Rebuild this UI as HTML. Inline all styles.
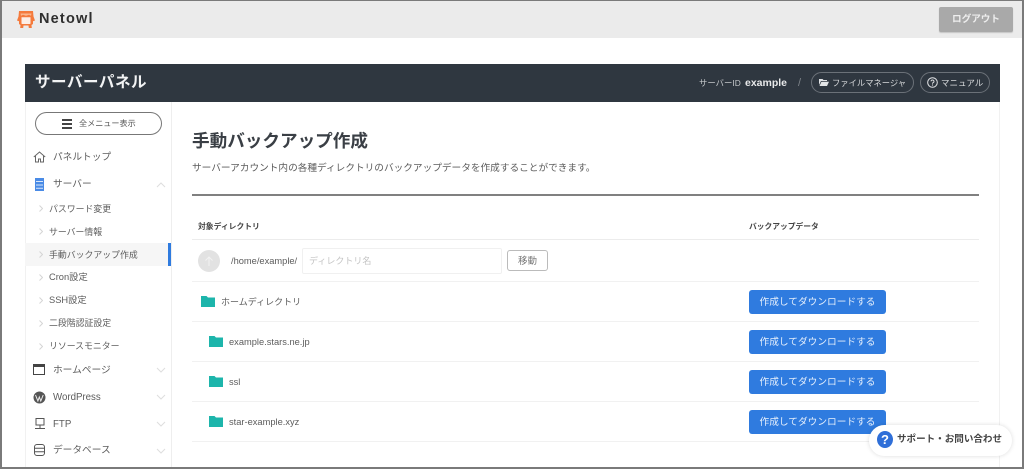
<!DOCTYPE html>
<html lang="ja"><head><meta charset="utf-8"><title>手動バックアップ作成</title>
<style>
*{box-sizing:border-box}
html,body{margin:0;padding:0;width:1024px;height:469px;overflow:hidden;background:#fff;font-family:"Liberation Sans","Noto Sans CJK JP",sans-serif;color:#555}
.a{position:absolute;white-space:nowrap}
svg{position:absolute;display:block}
.t{line-height:16px}
.sub{font-size:8.9px;color:#5c5c5c;left:49px}
.chev{left:39px;width:4px;height:7px}
.main{font-size:9.7px;color:#5c5c5c;left:53px}
.line{left:192px;width:787px;height:1px;background:#f1f1f1}
.btn{left:749px;width:137px;height:24px;background:#2f7bdf;border-radius:3px;color:#e6effb;font-size:9.7px;line-height:25px;text-align:center}
.fold{width:14px;height:11px}
.row{font-size:9px;color:#5c5c5c}
.lat{font-size:9.3px}
.pill{top:72px;height:21px;border:1px solid #6b7178;border-radius:11px;color:#d8dadc;line-height:21px}
</style></head><body>

<div class="a" style="left:0;top:0;width:1024px;height:38px;background:#ebebeb"></div>
<svg style="left:17px;top:11px" width="18" height="17" viewBox="0 0 18 17"><path d="M2 0h14l.5 5.500L18 9.500l-2 .8V13l-1.500 1 .3 3h-3l-.3-2.500h-5l-.3 2.500h-3l.3-3L2 13v-2.700l-2-.8 1.500-4z" fill="#f47a3c"/><path d="M4.500 6.200h9v6a.8.8 0 0 1-.8.8H5.300a.8.8 0 0 1-.8-.8z" fill="#fdeee6"/><path d="M3.500 2.500h11l-.5 2.300-2-1-3 1-3-1-2 1z" fill="#fbb78f"/></svg>
<div class="a" style="left:39px;top:10px;font-size:14.5px;line-height:18px;font-weight:bold;color:#2f2f2f;letter-spacing:1.2px">Netowl</div>
<div class="a" style="left:939px;top:7px;width:74px;height:25px;background:#a9a9a9;border-radius:2px;box-shadow:0 1px 1px #c4c4c4;color:#eee;font-size:9.6px;font-weight:bold;line-height:25px;text-align:center">ログアウト</div>

<div class="a" style="left:25px;top:102px;width:975px;height:366px;border-left:1px solid #f1f1f1;border-right:1px solid #f1f1f1"></div>
<div class="a" style="left:171px;top:102px;width:1px;height:366px;background:#eeeeee"></div>
<div class="a" style="left:25px;top:64px;width:975px;height:38px;background:#2f3740"></div>
<div class="a" style="left:35px;top:73px;font-size:15.5px;font-weight:bold;color:#f2f3f4;line-height:20px;letter-spacing:.55px">サーバーパネル</div>
<div class="a t" style="left:699px;top:75px;font-size:8.4px;color:#c4c7ca">サーバーID</div>
<div class="a t" style="left:745px;top:75px;font-size:10.5px;font-weight:bold;color:#e8e9ea">example</div>
<div class="a t" style="left:798px;top:75px;font-size:11px;color:#7e848a">/</div>
<div class="a pill" style="left:811px;width:103px;padding-left:20px;font-size:8.3px">ファイルマネージャ</div>
<svg style="left:819px;top:78px" width="10" height="8" viewBox="0 0 10 8"><path d="M0 1h3.500l1 1H8v1H2L0 7z" fill="#e2e4e6"/><path d="M2.400 3.800H10L8 8H.5z" fill="#e2e4e6"/></svg>
<div class="a pill" style="left:920px;width:70px;padding-left:20px;font-size:8.5px">マニュアル</div>
<svg style="left:927px;top:77px" width="11" height="11" viewBox="0 0 11 11"><circle cx="5.500" cy="5.500" r="4.800" fill="none" stroke="#dfe1e3"/><path d="M4 4.300a1.500 1.400 0 1 1 2.200 1.300c-.5.300-.7.500-.7 1.100" fill="none" stroke="#dfe1e3"/><circle cx="5.500" cy="8" r=".6" fill="#dfe1e3"/></svg>

<div class="a" style="left:35px;top:112px;width:127px;height:23px;border:1px solid #777;border-radius:12px"></div>
<div class="a" style="left:62px;top:119px;width:10px;height:2px;background:#444"></div>
<div class="a" style="left:62px;top:123px;width:10px;height:2px;background:#444"></div>
<div class="a" style="left:62px;top:127px;width:10px;height:2px;background:#444"></div>
<div class="a t" style="left:79px;top:116px;font-size:8.1px;color:#555">全メニュー表示</div>

<svg style="left:33px;top:151px" width="13" height="12" viewBox="0 0 13 12"><path d="M.8 6 6.500 1l5.700 5M2.500 5v6h3V8h2v3h3V5" fill="none" stroke="#666" stroke-width="1"/></svg>
<div class="a t main" style="top:150px">パネルトップ</div>
<svg style="left:35px;top:178px" width="9" height="13" viewBox="0 0 9 13"><rect width="9" height="13" fill="#4a8be6"/><path d="M1 3.500h7M1 7h7M1 10.300h7" stroke="#dbe8fa"/></svg>
<div class="a t main" style="top:177px">サーバー</div>
<svg style="left:156px;top:182px" width="10" height="6" viewBox="0 0 10 6"><path d="M1 5l4-4 4 4" fill="none" stroke="#dedede"/></svg>

<div class="a" style="left:25px;top:243px;width:144px;height:23px;background:#f6f6f6"></div>
<div class="a" style="left:168px;top:243px;width:3px;height:23px;background:#2f7bdf"></div>

<svg class="chev" style="top:205px" viewBox="0 0 4 7"><path d="M.5.500l3 3-3 3" fill="none" stroke="#d5d5d5"/></svg>
<div class="a t sub" style="top:201px">パスワード変更</div>
<svg class="chev" style="top:228px" viewBox="0 0 4 7"><path d="M.5.500l3 3-3 3" fill="none" stroke="#d5d5d5"/></svg>
<div class="a t sub" style="top:224px">サーバー情報</div>
<svg class="chev" style="top:251px" viewBox="0 0 4 7"><path d="M.5.500l3 3-3 3" fill="none" stroke="#d5d5d5"/></svg>
<div class="a t sub" style="top:247px">手動バックアップ作成</div>
<svg class="chev" style="top:274px" viewBox="0 0 4 7"><path d="M.5.500l3 3-3 3" fill="none" stroke="#d5d5d5"/></svg>
<div class="a t sub" style="top:269px;font-size:9.300px">Cron設定</div>
<svg class="chev" style="top:297px" viewBox="0 0 4 7"><path d="M.5.500l3 3-3 3" fill="none" stroke="#d5d5d5"/></svg>
<div class="a t sub" style="top:292px;font-size:9.300px">SSH設定</div>
<svg class="chev" style="top:320px" viewBox="0 0 4 7"><path d="M.5.500l3 3-3 3" fill="none" stroke="#d5d5d5"/></svg>
<div class="a t sub" style="top:315px">二段階認証設定</div>
<svg class="chev" style="top:343px" viewBox="0 0 4 7"><path d="M.5.500l3 3-3 3" fill="none" stroke="#d5d5d5"/></svg>
<div class="a t sub" style="top:338px">リソースモニター</div>

<svg style="left:33px;top:364px" width="12" height="11" viewBox="0 0 12 11"><rect x=".5" y=".5" width="11" height="10" fill="none" stroke="#444"/><rect x="0" y="0" width="12" height="3" fill="#444"/></svg>
<div class="a t main" style="top:363px">ホームページ</div>
<svg style="left:156px;top:367px" width="10" height="6" viewBox="0 0 10 6"><path d="M1 1l4 4 4-4" fill="none" stroke="#dedede"/></svg>
<svg style="left:33px;top:391px" width="13" height="13" viewBox="0 0 13 13"><circle cx="6.500" cy="6.500" r="6" fill="#555"/><path d="M2.500 4l2.400 6 1.400-4 1.500 4 2.400-6" fill="none" stroke="#eee"/></svg>
<div class="a t main" style="top:390px">WordPress</div>
<svg style="left:156px;top:394px" width="10" height="6" viewBox="0 0 10 6"><path d="M1 1l4 4 4-4" fill="none" stroke="#dedede"/></svg>
<svg style="left:34px;top:418px" width="12" height="12" viewBox="0 0 12 12"><rect x="2" y=".5" width="8" height="6.500" fill="none" stroke="#555"/><path d="M6 7v3M1 10.500h10" stroke="#555"/></svg>
<div class="a t main" style="top:417px">FTP</div>
<svg style="left:156px;top:421px" width="10" height="6" viewBox="0 0 10 6"><path d="M1 1l4 4 4-4" fill="none" stroke="#dedede"/></svg>
<svg style="left:34px;top:444px" width="11" height="12" viewBox="0 0 11 12"><rect x=".5" y=".5" width="10" height="11" rx="2.500" fill="none" stroke="#555"/><path d="M.5 4.200h10M.5 7.800h10" stroke="#555"/></svg>
<div class="a t main" style="top:443px">データベース</div>
<svg style="left:156px;top:448px" width="10" height="6" viewBox="0 0 10 6"><path d="M1 1l4 4 4-4" fill="none" stroke="#dedede"/></svg>

<div class="a" style="left:192px;top:129px;font-size:17.6px;font-weight:bold;color:#3a3f45;line-height:24px">手動バックアップ作成</div>
<div class="a t" style="left:192px;top:160px;font-size:9.67px;color:#5c5c5c;line-height:18px">サーバーアカウント内の各種ディレクトリのバックアップデータを作成することができます。</div>
<div class="a" style="left:192px;top:194px;width:787px;height:2px;background:#808080"></div>

<div class="a t" style="left:198px;top:219px;font-size:7.8px;font-weight:bold;color:#444">対象ディレクトリ</div>
<div class="a t" style="left:749px;top:219px;font-size:7.75px;font-weight:bold;color:#444">バックアップデータ</div>
<div class="a line" style="top:239px;background:#ececec"></div>

<div class="a" style="left:198px;top:250px;width:22px;height:22px;border-radius:50%;background:#e2e2e2"></div>
<svg style="left:205px;top:256px" width="8" height="10" viewBox="0 0 8 10"><path d="M4 10V1M.5 4.500 4 1l3.500 3.500" fill="none" stroke="#f2f2f2"/></svg>
<div class="a t row" style="left:231px;top:253px;font-size:9.3px">/home/example/</div>
<div class="a" style="left:302px;top:248px;width:200px;height:26px;border:1px solid #f0f0f0;border-radius:2px;font-size:9px;color:#c4c4c4;line-height:25px;padding-left:6px">ディレクトリ名</div>
<div class="a" style="left:507px;top:250px;width:41px;height:21px;border:1px solid #bbb;border-radius:3px;font-size:9.500px;color:#777;line-height:21px;text-align:center">移動</div>
<div class="a line" style="top:281px"></div>

<svg class="fold" style="left:201px;top:296px" viewBox="0 0 14 11"><path d="M0 0h5.500l1.500 1.500h7V11H0z" fill="#1db5ab"/></svg>
<div class="a t row" style="left:221px;top:294px">ホームディレクトリ</div>
<div class="a btn" style="top:290px">作成してダウンロードする</div>
<div class="a line" style="top:321px"></div>

<svg class="fold" style="left:209px;top:336px" viewBox="0 0 14 11"><path d="M0 0h5.500l1.500 1.500h7V11H0z" fill="#1db5ab"/></svg>
<div class="a t row lat" style="left:229px;top:334px">example.stars.ne.jp</div>
<div class="a btn" style="top:330px">作成してダウンロードする</div>
<div class="a line" style="top:361px"></div>

<svg class="fold" style="left:209px;top:376px" viewBox="0 0 14 11"><path d="M0 0h5.500l1.500 1.500h7V11H0z" fill="#1db5ab"/></svg>
<div class="a t row lat" style="left:229px;top:374px">ssl</div>
<div class="a btn" style="top:370px">作成してダウンロードする</div>
<div class="a line" style="top:401px"></div>

<svg class="fold" style="left:209px;top:416px" viewBox="0 0 14 11"><path d="M0 0h5.500l1.500 1.500h7V11H0z" fill="#1db5ab"/></svg>
<div class="a t row lat" style="left:229px;top:414px">star-example.xyz</div>
<div class="a btn" style="top:410px">作成してダウンロードする</div>
<div class="a line" style="top:441px"></div>

<div class="a" style="left:869px;top:425px;width:143px;height:31px;background:#fff;border-radius:16px;box-shadow:0 0 5px rgba(0,0,0,.14)"></div>
<div class="a" style="left:877px;top:431px;width:16px;height:17px;border-radius:50%;background:#2f6fd8;color:#fff;font-size:13px;font-weight:bold;line-height:17px;text-align:center">?</div>
<div class="a t" style="left:897px;top:432px;font-size:9.55px;font-weight:bold;color:#444">サポート・お問い合わせ</div>

<div class="a" style="left:0;top:0;width:1024px;height:469px;border:solid #7a7a7a;border-width:1px 2px 2px 2px"></div>
</body></html>
